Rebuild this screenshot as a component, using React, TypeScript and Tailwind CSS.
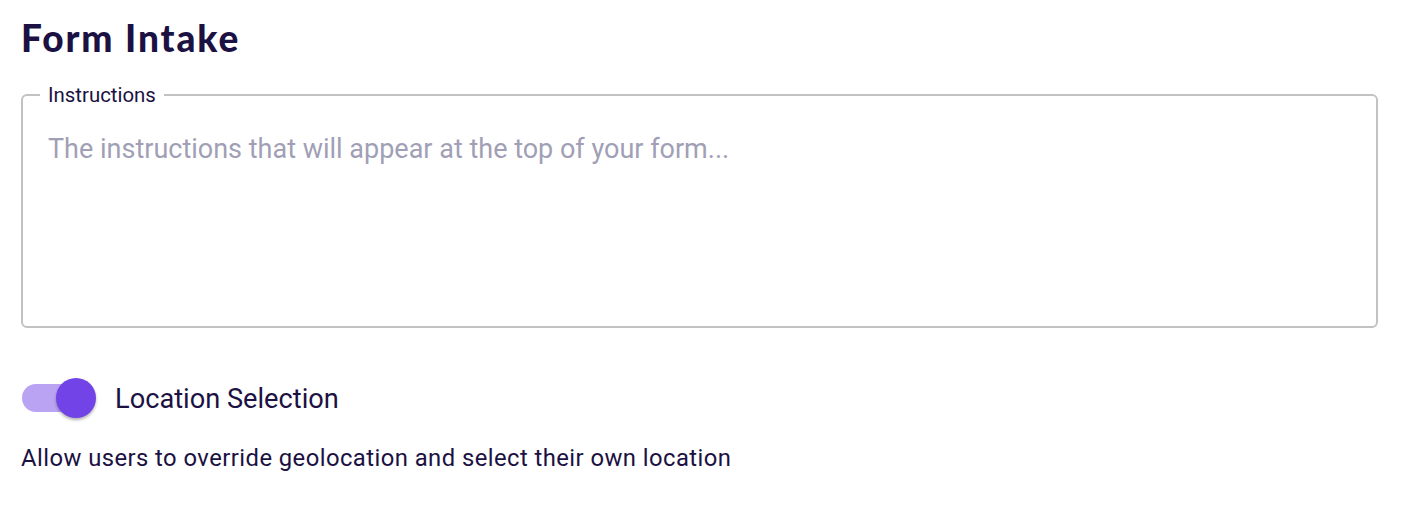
import { useState } from "react";

export default function App() {
  const [on, setOn] = useState(true);
  return (
    <div className="w-[1402px] h-[520px] bg-white px-[21px] pt-[14px]" style={{ fontFamily: "Roboto, sans-serif" }}>
      <h1 className="text-[37px] leading-[48px] font-black text-[#1b1142] tracking-[1.9px]" style={{ fontFamily: "Lato, sans-serif" }}>
        Form Intake
      </h1>

      <fieldset className="mt-[21px] h-[245px] w-[1357px] rounded-[6px] border-2 border-[#c2c2c2] pl-[17px] pr-[20px]">
        <legend className="px-[8px] text-[20.4px] leading-[24px] text-[#1b1142]">Instructions</legend>
        <textarea
          className="mt-[26px] ml-[8px] h-[168px] w-[calc(100%-8px)] resize-none text-[27px] leading-[32px] text-[#1b1142] outline-none placeholder:text-[#a19fb6]"
          placeholder="The instructions that will appear at the top of your form..."
        />
      </fieldset>

      <div className="mt-[50px] flex items-center">
        <button
          type="button"
          onClick={() => setOn(!on)}
          className="relative h-[40px] w-[76px] shrink-0"
          aria-pressed={on}
        >
          <span className="absolute left-[1px] top-[6px] h-[28px] w-[68px] rounded-full bg-[#b9a3f2]" />
          <span
            className={`absolute top-0 h-[40px] w-[40px] rounded-full bg-[#7243e6] shadow-[0_2px_3px_rgba(0,0,0,0.3)] ${on ? "left-[35px]" : "left-0"}`}
          />
        </button>
        <span className="ml-[18px] pt-[2px] text-[27.2px] leading-[32px] text-[#1b1142]">Location Selection</span>
      </div>

      <p className="mt-[26px] text-[23.8px] leading-[28px] tracking-[0.45px] text-[#1b1142]">
        Allow users to override geolocation and select their own location
      </p>
    </div>
  );
}
